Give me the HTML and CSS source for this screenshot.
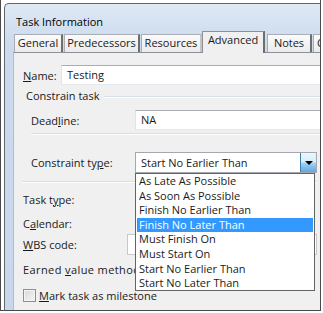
FILE: index.html
```html
<!DOCTYPE html>
<html lang="en">
<head>
    <meta charset="UTF-8">
    <meta name="viewport" content="width=device-width, initial-scale=1.0">
    <title>Task Information</title>
    <link rel="stylesheet" href="styles.css">
</head>
<body>
    <div class="shot">
        <div class="window">
            <!-- title bar -->
            <div class="titlebar">Task Information</div>

            <div class="frame">
                <!-- tabs -->
                <div class="tabs">
                    <div class="tab t-general">General</div>
                    <div class="tab t-pred">Predecessors</div>
                    <div class="tab t-res">Resources</div>
                    <div class="tab t-adv active">Advanced</div>
                    <div class="tab t-notes">Notes</div>
                    <div class="tab t-custom">Custom Fields</div>
                </div>

                <!-- advanced page -->
                <div class="panel">
                    <div class="row name-row">
                        <label class="label name-label"><u>N</u>ame:</label>
                        <div class="field wide">Testing</div>
                    </div>

                    <div class="group">
                        <div class="legend"><span>Constrain task</span></div>
                        <div class="row deadline-row">
                            <label class="label">Dead<u>l</u>ine:</label>
                            <div class="field wide">NA</div>
                        </div>
                        <div class="sep"></div>
                        <div class="row constraint-row">
                            <label class="label">Constraint ty<u>p</u>e:</label>
                            <div class="combo">
                                <span class="combo-text">Start No Earlier Than</span>
                                <span class="combo-btn"><span class="arrow"></span></span>
                                <ul class="list">
                                    <li>As Late As Possible</li>
                                    <li>As Soon As Possible</li>
                                    <li>Finish No Earlier Than</li>
                                    <li class="selected">Finish No Later Than</li>
                                    <li>Must Finish On</li>
                                    <li>Must Start On</li>
                                    <li>Start No Earlier Than</li>
                                    <li>Start No Later Than</li>
                                </ul>
                            </div>
                        </div>
                    </div>

                    <div class="row plain-row r-type">
                        <label class="label">Task t<u>y</u>pe:</label>
                    </div>
                    <div class="row plain-row r-cal">
                        <label class="label">C<u>a</u>lendar:</label>
                    </div>
                    <div class="row plain-row r-wbs">
                        <label class="label"><u>W</u>BS code:</label>
                        <div class="field wbs"></div>
                    </div>
                    <div class="row plain-row r-ev">
                        <label class="label ev-label">Earned <u>v</u>alue method:</label>
                    </div>

                    <div class="check-row">
                        <span class="checkbox"></span>
                        <label><u>M</u>ark task as milestone</label>
                    </div>
                </div>
            </div>
        </div>
    </div>
</body>
</html>
```

FILE: styles.css
```css
/* page */
* {
    box-sizing: border-box;
}

body {
    margin: 0;
    background-color: #fff;
    font-family: "Open Sans", "Noto Sans", sans-serif;
    font-size: 11px;
    color: #1a1a1a;
}

/* screenshot border */
.shot {
    width: 321px;
    height: 311px;
    border-left: 1px solid #4a4a4a;
    border-right: 1px solid #4a4a4a;
    border-bottom: 1px solid #4a4a4a;
    display: flex;
    flex-direction: column;
}

/* dialog window */
.window {
    flex: 1;
    margin: 3px 0 0 3px;
    border-top: 1px solid #5f6670;
    border-left: 1px solid #5f6670;
    border-top-left-radius: 5px;
    background: linear-gradient(#dfe9f5, #cbdaed 40px, #c8d7eb);
    display: flex;
    flex-direction: column;
    overflow: hidden;
}

.titlebar {
    height: 29px;
    padding: 10px 0 0 11px;
    font-size: 11px;
    color: #000;
    line-height: 16px;
}

.frame {
    flex: 1;
    padding-left: 8px;
    display: flex;
    flex-direction: column;
}

/* tabs */
.tabs {
    height: 19px;
    display: flex;
    align-items: flex-end;
    gap: 1px;
    white-space: nowrap;
}

.tab {
    flex-shrink: 0;
    height: 18px;
    line-height: 16px;
    text-align: center;
    background: linear-gradient(#fbfbfb, #ebebeb);
    border-top: 1px solid #a9adb5;
    border-left: 1px solid #a9adb5;
    border-right: 2px solid #6e6e6e;
    color: #1a1a1a;
}

.t-general { margin-left: 1px; width: 49px; }
.t-pred { width: 76px; }
.t-res { width: 61px; border-right-color: #c4c4c4; }
.t-notes { width: 45px; margin-left: 1px; }
.t-custom { width: 80px; text-align: left; padding-left: 3px; }

.tab.active {
    width: 63px;
    height: 22px;
    margin-left: -1px;
    margin-bottom: -1px;
    padding-bottom: 3px;
    line-height: 16px;
    background: #f0f0f0;
    border-top-color: #8c9099;
    border-left-color: #8c9099;
    position: relative;
    z-index: 1;
}

/* page body */
.panel {
    flex: 1;
    background-color: #f0f0f0;
    border-top: 1px solid #8c9099;
    border-left: 1px solid #b5bcc6;
    padding: 12px 3px 0 9px;
    overflow: hidden;
}

.row {
    display: flex;
    align-items: center;
}

.label {
    width: 104px;
    flex-shrink: 0;
    white-space: nowrap;
}

.name-row {
    height: 20px;
}

.name-label {
    width: 38px;
}

.field {
    height: 20px;
    background-color: #fff;
    border: 1px solid;
    border-color: #abadb3 #dbdfe6 #e3e9ef #e2e3ea;
    padding-left: 5px;
    line-height: 18px;
}

.field.wide {
    flex: 1;
    margin-right: -8px;
}

/* constrain task group */
.group {
    margin: 4px 0 0 -1px;
    padding-left: 9px;
    border-bottom: 1px solid #d5dfe5;
    box-shadow: 0 1px 0 #fff;
    padding-bottom: 8px;
}

.legend {
    height: 14px;
    margin-left: -5px;
    display: flex;
    align-items: center;
    line-height: 14px;
}

.legend::after {
    content: "";
    flex: 1;
    height: 1px;
    margin-left: 4px;
    margin-right: -8px;
    background-color: #d5dfe5;
    box-shadow: 0 1px 0 #fff;
}

.deadline-row {
    height: 20px;
    margin-top: 7px;
}

.sep {
    height: 1px;
    margin-top: 3px;
    margin-right: -8px;
    background-color: #d5dfe5;
    box-shadow: 0 1px 0 #fff;
}

.constraint-row {
    height: 21px;
    margin-top: 18px;
}

/* combo box */
.combo {
    flex: 1;
    height: 21px;
    background-color: #fff;
    border: 1px solid #a4a8ae;
    display: flex;
    align-items: center;
    position: relative;
}

.combo-text {
    flex: 1;
    padding-left: 5px;
}

.combo-btn {
    width: 16px;
    height: 19px;
    border-left: 1px solid #3c7fb1;
    background: linear-gradient(#eaf6fd, #d7effc 45%, #9ed1f4 55%, #5fa9de);
    display: flex;
    align-items: center;
    justify-content: center;
}

.arrow {
    width: 0;
    height: 0;
    border-left: 4px solid transparent;
    border-right: 4px solid transparent;
    border-top: 4px solid #000;
    margin-top: 1px;
}

/* dropped list */
.list {
    position: absolute;
    top: 20px;
    left: -1px;
    width: 180px;
    height: 118px;
    margin: 0;
    padding: 0;
    list-style: none;
    background-color: #fff;
    border: 1px solid #646464;
    z-index: 5;
}

.list li {
    height: 14.6px;
    line-height: 14.6px;
    padding-left: 3px;
    white-space: nowrap;
}

.list li.selected {
    background-color: #3399ff;
    color: #fff;
    margin: 0 1px;
    padding-left: 2px;
}

/* lower rows */
.plain-row {
    height: 20px;
}

.r-type { margin-top: 7px; }
.r-cal { margin-top: 4px; }
.r-wbs { margin-top: 1px; height: 21px; }
.r-ev { margin-top: 4px; }

.ev-label {
    letter-spacing: 0.4px;
}

.field.wbs {
    flex: 1;
    height: 21px;
    border-color: #c8c8c8;
}

/* milestone checkbox */
.check-row {
    display: flex;
    align-items: center;
    height: 16px;
    margin-top: 8px;
    gap: 3px;
}

.checkbox {
    width: 13px;
    height: 13px;
    border: 1px solid #8e8f8f;
    background: linear-gradient(135deg, #d8d8d8, #f6f6f6);
    box-shadow: inset 0 0 0 1px #f4f4f4;
}
```
